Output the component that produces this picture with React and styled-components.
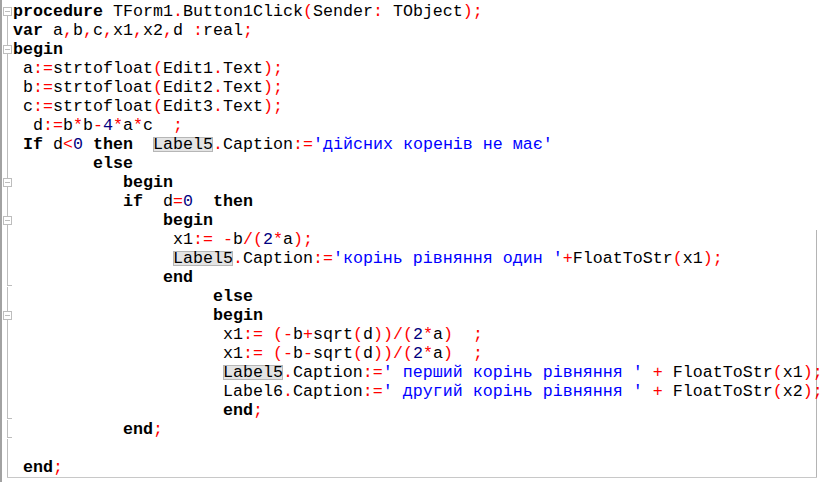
import React from "react";
import styled, { createGlobalStyle } from "styled-components";

const GlobalStyle = createGlobalStyle`
  html, body {
    margin: 0;
    padding: 0;
    background: #ffffff;
  }
`;

const KEYWORDS = ["procedure", "var", "begin", "end", "if", "then", "else"];
const HIGHLIGHT = "Label5";

const source = [
  { fold: "first", text: "procedure TForm1.Button1Click(Sender: TObject);" },
  { fold: "line", text: "var a,b,c,x1,x2,d :real;" },
  { fold: "open", text: "begin" },
  { fold: "line", text: " a:=strtofloat(Edit1.Text);" },
  { fold: "line", text: " b:=strtofloat(Edit2.Text);" },
  { fold: "line", text: " c:=strtofloat(Edit3.Text);" },
  { fold: "line", text: "  d:=b*b-4*a*c  ;" },
  { fold: "line", text: " If d<0 then  Label5.Caption:='дійсних коренів не має'" },
  { fold: "line", text: "        else" },
  { fold: "open", text: "           begin" },
  { fold: "line", text: "           if  d=0  then" },
  { fold: "open", text: "               begin" },
  { fold: "line", text: "                x1:= -b/(2*a);", edge: true },
  { fold: "line", text: "                Label5.Caption:='корінь рівняння один '+FloatToStr(x1);", edge: true },
  { fold: "end", text: "               end", edge: true },
  { fold: "line", text: "                    else", edge: true },
  { fold: "open", text: "                    begin", edge: true },
  { fold: "line", text: "                     x1:= (-b+sqrt(d))/(2*a)  ;", edge: true },
  { fold: "line", text: "                     x1:= (-b-sqrt(d))/(2*a)  ;", edge: true },
  { fold: "line", text: "                     Label5.Caption:=' перший корінь рівняння ' + FloatToStr(x1);", edge: true },
  { fold: "line", text: "                     Label6.Caption:=' другий корінь рівняння ' + FloatToStr(x2);", edge: true },
  { fold: "end", text: "                     end;", edge: true },
  { fold: "end", text: "           end;", edge: true },
  { fold: "line", text: "", edge: true },
  { fold: "line", text: " end;", edge: true },
];

// split a line of pascal into coloured pieces
function tokenize(text) {
  const re = /('[^']*'?)|([A-Za-z_][A-Za-z0-9_]*)|(\d+)|(\s+)|(.)/g;
  const out = [];
  let m;
  while ((m = re.exec(text)) !== null) {
    if (m[1]) out.push({ kind: "str", value: m[1] });
    else if (m[2]) {
      const word = m[2];
      if (KEYWORDS.includes(word.toLowerCase())) out.push({ kind: "kw", value: word });
      else if (word === HIGHLIGHT) out.push({ kind: "hl", value: word });
      else out.push({ kind: "id", value: word });
    } else if (m[3]) out.push({ kind: "num", value: m[3] });
    else if (m[4]) out.push({ kind: "space", value: m[4] });
    else out.push({ kind: "sym", value: m[5] });
  }
  return out;
}

const colors = {
  kw: "#000000",
  id: "#000000",
  hl: "#000000",
  num: "#000080",
  str: "#0000ff",
  sym: "#ff0000",
  space: "#000000",
};

const Editor = styled.div`
  box-sizing: border-box;
  height: 482px;
  padding-top: 2px;
  border-left: 2px solid #a2a2a2;
  font-family: "Liberation Mono", "Courier New", monospace;
  font-size: 16.67px;
  color: #000;
`;

const Line = styled.div`
  display: flex;
  width: 815px;
  height: 19px;
  box-shadow: ${(p) => (p.$edge ? "inset -1px 0 0 #b4b4b4" : "none")};
`;

const Gutter = styled.svg`
  flex: 0 0 11px;
  width: 11px;
  height: 19px;
  display: block;
`;

const Code = styled.div`
  padding-left: 0;
  white-space: pre;
  line-height: 19px;
`;

const Tok = styled.span`
  color: ${(p) => colors[p.$kind]};
  font-weight: ${(p) => (p.$kind === "kw" ? 700 : 400)};
  ${(p) =>
    p.$kind === "hl" &&
    `
    display: inline-block;
    line-height: 15px;
    background: #e4e4e4;
    box-shadow: inset 0 0 0 1px #b6b6b6;
  `}
`;

const BottomRule = styled.div`
  margin-left: 5px;
  width: 810px;
  border-top: 1px solid #c8c8c8;
`;

const FOLD = "#bdbdbd";

function FoldMark({ type }) {
  return (
    <Gutter viewBox="0 0 11 19">
      {type === "line" && <line x1="5.5" y1="0" x2="5.5" y2="19" stroke={FOLD} />}
      {type === "end" && (
        <>
          <line x1="5.5" y1="0" x2="5.5" y2="18" stroke={FOLD} />
          <line x1="5" y1="17.5" x2="10" y2="17.5" stroke={FOLD} />
        </>
      )}
      {(type === "open" || type === "first") && (
        <>
          {type === "open" && <line x1="5.5" y1="0" x2="5.5" y2="5" stroke={FOLD} />}
          <rect x="1.5" y="5.5" width="8" height="8" fill="#fff" stroke={FOLD} />
          <line x1="3" y1="9.5" x2="8" y2="9.5" stroke={FOLD} />
          <line x1="5.5" y1="14" x2="5.5" y2="19" stroke={FOLD} />
        </>
      )}
    </Gutter>
  );
}

export default function App() {
  return (
    <>
      <GlobalStyle />
      <Editor>
        {source.map((row, i) => (
          <Line key={i} $edge={row.edge}>
            <FoldMark type={row.fold} />
            <Code>
              {tokenize(row.text).map((t, j) => (
                <Tok key={j} $kind={t.kind}>
                  {t.value}
                </Tok>
              ))}
            </Code>
          </Line>
        ))}
        <BottomRule />
      </Editor>
    </>
  );
}
